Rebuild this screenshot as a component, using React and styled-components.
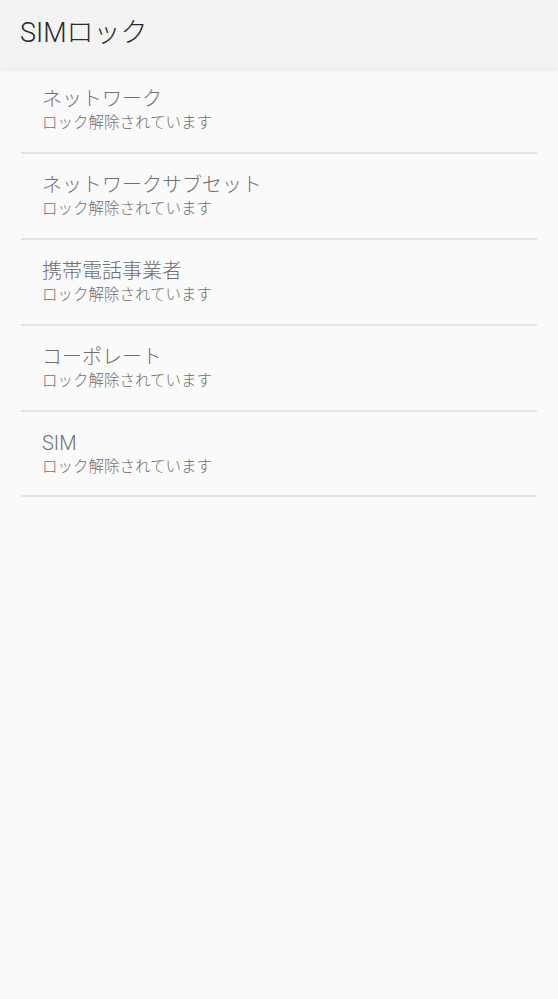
import React from "react";
import styled, { createGlobalStyle } from "styled-components";

const Global = createGlobalStyle`
  html, body { margin: 0; padding: 0; background: #fafafa; }
  body { font-family: Roboto, "Noto Sans CJK JP", sans-serif; }
`;

const Page = styled.div`
  min-height: 999px;
  background: #fafafa;
  display: flex;
  flex-direction: column;
`;

const AppBar = styled.header`
  height: 68px;
  background: #f3f3f3;
  box-shadow: 0 1px 4px rgba(0, 0, 0, 0.12);
  display: flex;
  align-items: center;
  padding: 0 20px;
  position: relative;
  z-index: 1;
`;

const Title = styled.h1`
  margin: 0;
  font-size: 27px;
  font-weight: 300;
  color: #2a2a2a;
  font-family: Roboto, "Noto Sans CJK JP", sans-serif;
  margin-top: -8px;
`;

const List = styled.ul`
  list-style: none;
  margin: 0;
  padding: 0 21px;
`;

const Item = styled.li`
  padding: 19px 21px 18px;
  border-bottom: 2px solid #e2e2e2;
  display: flex;
  flex-direction: column;
  &:nth-child(n + 4) {
    padding-bottom: 17.7px;
  }
`;

const ItemTitle = styled.span`
  font-size: 20px;
  line-height: 24px;
  font-weight: 300;
  color: #6f6f6f;
`;

const ItemSub = styled.span`
  margin-top: 2px;
  font-size: 15.5px;
  line-height: 21px;
  font-weight: 300;
  color: #6f6f6f;
`;

const items = ["ネットワーク", "ネットワークサブセット", "携帯電話事業者", "コーポレート", "SIM"];

export default function App() {
  return (
    <Page>
      <Global />
      <AppBar>
        <Title>SIMロック</Title>
      </AppBar>
      <List>
        {items.map((t) => (
          <Item key={t}>
            <ItemTitle>{t}</ItemTitle>
            <ItemSub>ロック解除されています</ItemSub>
          </Item>
        ))}
      </List>
    </Page>
  );
}
